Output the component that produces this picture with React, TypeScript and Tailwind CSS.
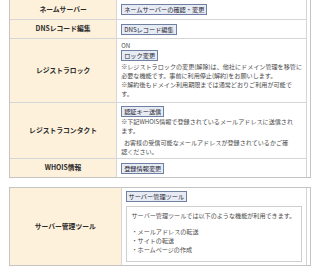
import React from "react";

const font = { fontFamily: '"Noto Sans CJK JP", "Noto Sans", sans-serif' };

function Btn({ children }: { children: React.ReactNode }) {
  return (
    <span className="inline-flex h-[11px] items-center whitespace-nowrap border border-[#6f80a3] bg-[#e6ebf4] px-[2px] text-[6.2px] leading-[9px] text-[#1f2433]">
      {children}
    </span>
  );
}

function Label({ children }: { children: React.ReactNode }) {
  return (
    <td className="w-[111px] border-b border-[#d6d6d6] bg-[#fdf1db] text-center align-middle text-[6.8px] font-bold leading-[9px] text-[#2a2a2a]">
      {children}
    </td>
  );
}

function Val({ children, last }: { children: React.ReactNode; last?: boolean }) {
  return (
    <td
      className={
        "border-l border-r border-[#d6d6d6] bg-white px-[4px] align-top text-[6.1px] leading-[9px] text-[#4a4a4a] " +
        (last ? "" : "border-b")
      }
    >
      {children}
    </td>
  );
}

export default function App() {
  return (
    <div className="h-[273px] w-[320px] overflow-hidden bg-white" style={font}>
      <div className="-mt-[1px] ml-[9px] w-[302px] border border-[#c4c4c4]">
        <table className="w-[297px] border-collapse">
          <tbody>
            <tr className="h-[19px]">
              <Label>ネームサーバー</Label>
              <Val>
                <div className="pt-[4px]">
                  <Btn>ネームサーバーの確認・変更</Btn>
                </div>
              </Val>
            </tr>
            <tr className="h-[19px]">
              <Label>DNSレコード編集</Label>
              <Val>
                <div className="pt-[4px]">
                  <Btn>DNSレコード編集</Btn>
                </div>
              </Val>
            </tr>
            <tr className="h-[64px]">
              <Label>レジストラロック</Label>
              <Val>
                <div className="whitespace-nowrap pt-[2px]">
                  <div>ON</div>
                  <div className="mb-[1px]">
                    <Btn>ロック変更</Btn>
                  </div>
                  <div>※レジストラロックの変更(解除)は、他社にドメイン管理を移管に</div>
                  <div>必要な機能です。事前に利用停止(解約)をお願いします。</div>
                  <div>※解約後もドメイン利用期限までは通常どおりご利用が可能で</div>
                  <div>す。</div>
                </div>
              </Val>
            </tr>
            <tr className="h-[56px]">
              <Label>レジストラコンタクト</Label>
              <Val>
                <div className="whitespace-nowrap pt-[3px]">
                  <div>
                    <Btn>認証キー送信</Btn>
                  </div>
                  <div>※下記WHOIS情報で登録されているメールアドレスに送信され</div>
                  <div className="mb-[3px]">ます。</div>
                  <div>&nbsp;&nbsp;お客様の受信可能なメールアドレスが登録されているかご確</div>
                  <div>認ください。</div>
                </div>
              </Val>
            </tr>
            <tr className="h-[19px]">
              <td className="w-[111px] bg-[#fdf1db] text-center align-middle text-[6.8px] font-bold leading-[9px] text-[#2a2a2a]">
                WHOIS情報
              </td>
              <Val last>
                <div className="pt-[4px]">
                  <Btn>登録情報変更</Btn>
                </div>
              </Val>
            </tr>
          </tbody>
        </table>
      </div>

      <div className="ml-[9px] mt-[9px] w-[302px] border border-[#c4c4c4]">
        <table className="w-[297px] border-collapse">
          <tbody>
            <tr className="h-[77px]">
              <td className="w-[111px] bg-[#fdf1db] text-center align-middle text-[6.8px] font-bold leading-[9px] text-[#2a2a2a]">
                サーバー管理ツール
              </td>
              <Val last>
                <div className="pt-[3px]">
                  <Btn>サーバー管理ツール</Btn>
                </div>
                <div className="mt-[4px] h-[56px] whitespace-nowrap border border-[#cfcfcf] px-[5px] pt-[4px]">
                  <div className="mb-[7px]">サーバー管理ツールでは以下のような機能が利用できます。</div>
                  <div>・メールアドレスの転送</div>
                  <div>・サイトの転送</div>
                  <div>・ホームページの作成</div>
                </div>
              </Val>
            </tr>
          </tbody>
        </table>
      </div>
    </div>
  );
}
